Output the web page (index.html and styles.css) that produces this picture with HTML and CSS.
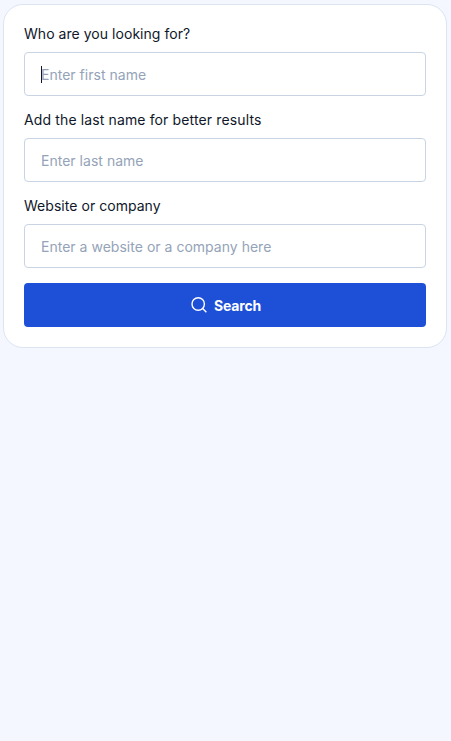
FILE: index.html
```html
<!DOCTYPE html>
<html lang="en">
<head>
<meta charset="utf-8">
<title>Search</title>
<link rel="stylesheet" href="styles.css">
</head>
<body>
<form class="card">
  <div class="field">
    <label class="label" for="first">Who are you looking for?</label>
    <div class="control"><span class="caret"></span><input class="input" id="first" type="text" placeholder="Enter first name"></div>
  </div>
  <div class="field">
    <label class="label label-wide" for="last">Add the last name for better results</label>
    <div class="control"><input class="input" id="last" type="text" placeholder="Enter last name"></div>
  </div>
  <div class="field">
    <label class="label" for="company">Website or company</label>
    <div class="control"><input class="input" id="company" type="text" placeholder="Enter a website or a company here"></div>
  </div>
  <button class="search" type="button">
    <svg class="icon" viewBox="0 0 16 16" fill="none" stroke="currentColor" stroke-width="1.4"><circle cx="7.2" cy="7" r="6.2"/><path d="M11.6 11.4 15.4 15.2"/></svg>
    <span class="search-text">Search</span>
  </button>
</form>
</body>
</html>
```
FILE: styles.css
```css
* { box-sizing: border-box; }
body {
  margin: 0;
  padding: 4px 4px 0 3px;
  background: #f4f7ff;
  font-family: Inter, sans-serif;
  font-size: 14px;
  color: #0f172a;
}
.card {
  height: 344px;
  padding: 19px 20px 20px;
  background: #fff;
  border: 1px solid #dbe4f1;
  border-radius: 20px;
}
.field { margin-bottom: 14px; }
.label {
  display: block;
  height: 20px;
  margin-bottom: 8px;
  line-height: 20px;
  letter-spacing: 0.04px;
}
.label-wide { letter-spacing: 0.13px; }
.control {
  position: relative;
  height: 44px;
  border: 1px solid #c8d4e3;
  border-radius: 4px;
}
.input {
  display: block;
  width: 100%;
  height: 100%;
  padding: 0 16px;
  border: 0;
  outline: 0;
  background: transparent;
  font: inherit;
  letter-spacing: 0.02px;
}
.input::placeholder { color: #94a3b8; opacity: 1; }
.caret {
  position: absolute;
  left: 16px;
  top: 13px;
  width: 1px;
  height: 17px;
  background: #0f172a;
}
.search {
  display: flex;
  align-items: center;
  justify-content: center;
  gap: 7px;
  width: 100%;
  height: 44px;
  margin-top: 15px;
  padding: 0 0 0 2px;
  border: 0;
  border-radius: 4px;
  background: #1d4fd7;
  color: #fff;
  font: 700 14px/20px Inter, sans-serif;
  letter-spacing: -0.15px;
}
.search-text { padding-top: 2px; }
.icon { width: 16px; height: 16px; }
```
